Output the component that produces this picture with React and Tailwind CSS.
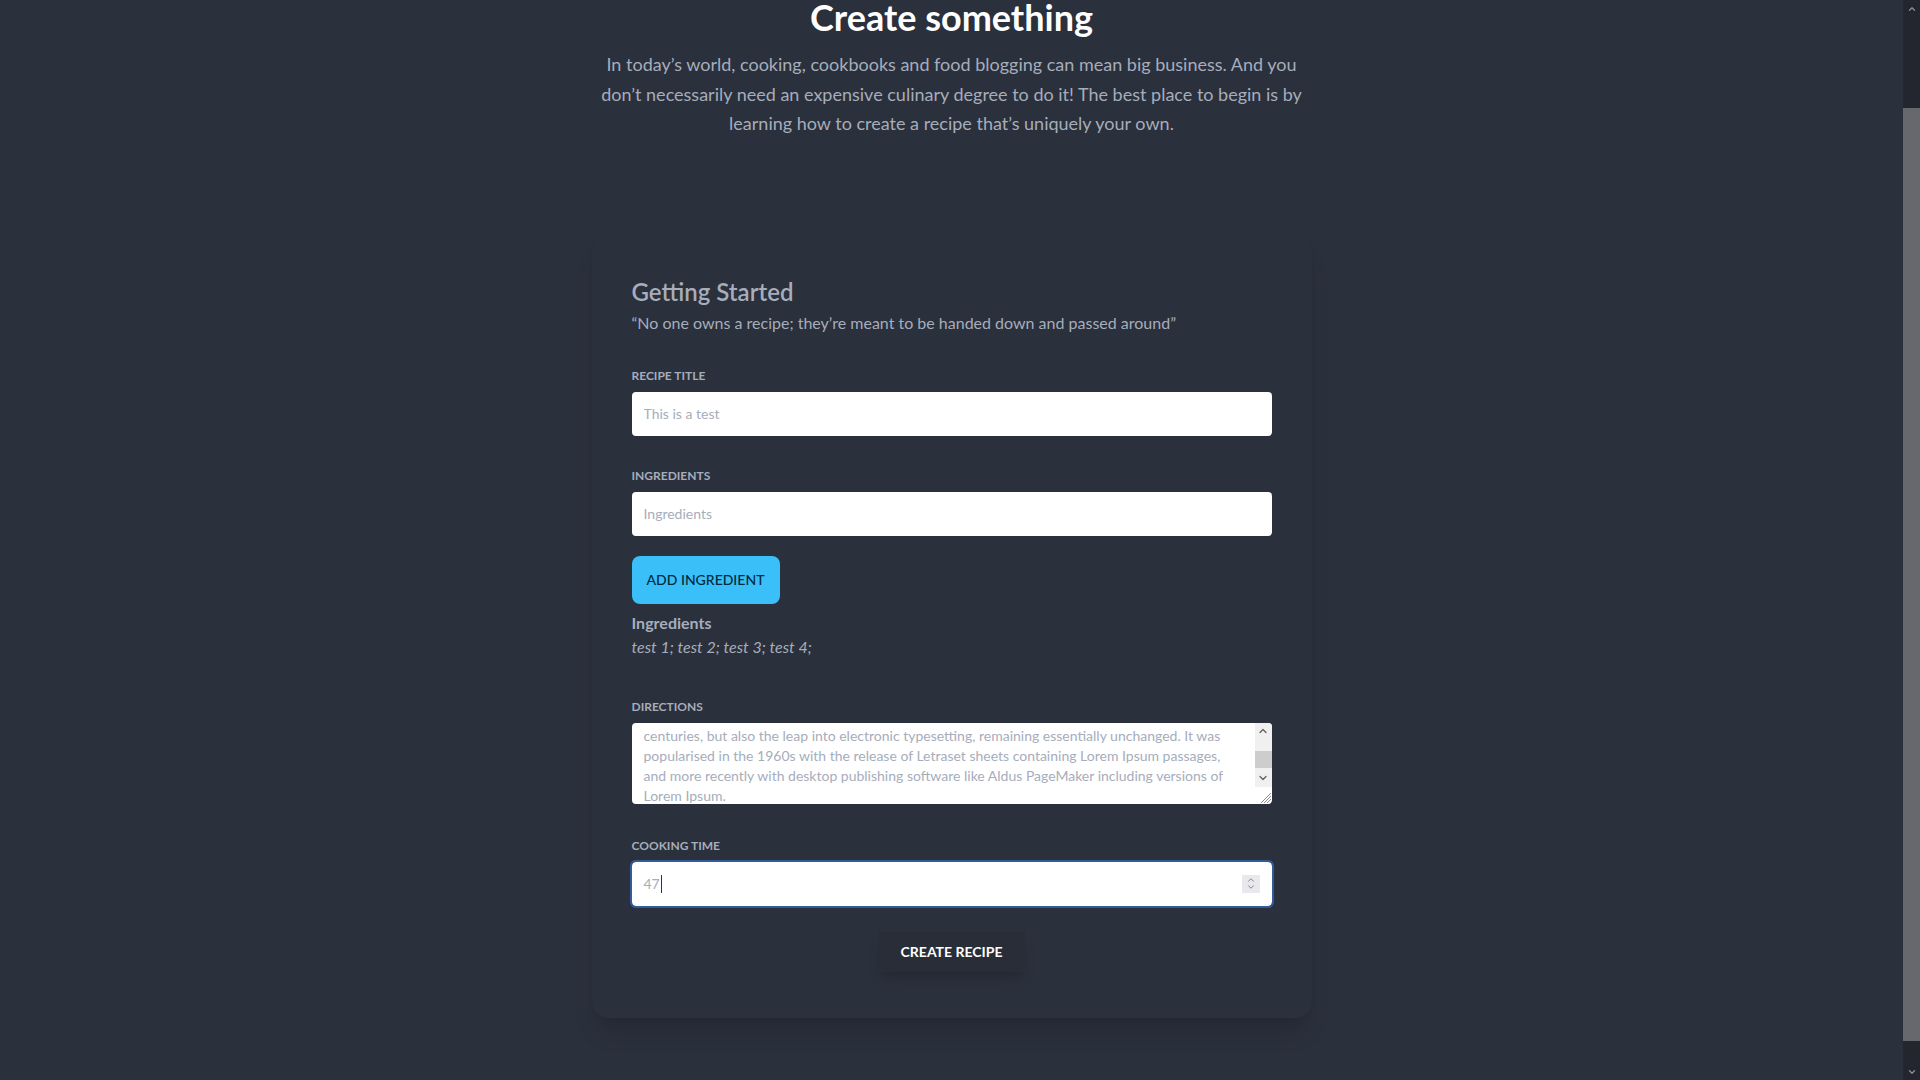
import { useEffect, useRef } from 'react';
import { ChevronUp, ChevronDown } from 'lucide-react';

const directions = [
  'Lorem Ipsum is simply dummy text of the printing and typesetting industry. Lorem Ipsum has',
  "been the industry's standard dummy text ever since the 1500s, when an unknown printer took a",
  'galley of type and scrambled it to make a type specimen book. It has survived not only five',
  'centuries, but also the leap into electronic typesetting, remaining essentially unchanged. It was',
  'popularised in the 1960s with the release of Letraset sheets containing Lorem Ipsum passages,',
  'and more recently with desktop publishing software like Aldus PageMaker including versions of',
  'Lorem Ipsum.',
].join('\n');

function FieldLabel({ children }) {
  return (
    <label className="block text-xs font-bold uppercase leading-4 text-[#a6adbb]">
      {children}
    </label>
  );
}

function DirectionsBox() {
  const ref = useRef(null);

  useEffect(() => {
    if (ref.current) ref.current.scrollTop = 65;
  }, []);

  return (
    <div className="mt-2 flex h-[81px] overflow-hidden rounded-[4px] bg-white">
      <textarea
        ref={ref}
        defaultValue={directions}
        spellCheck={false}
        className="min-w-0 flex-1 resize-none overflow-hidden whitespace-pre bg-transparent px-3 py-2 text-sm leading-5 text-[#a6adbb] outline-none"
      />
      <div className="flex w-[17px] flex-col">
        <div className="flex flex-1 flex-col bg-[#f0f0f0]">
          <div className="flex h-[17px] items-center justify-center">
            <ChevronUp size={12} strokeWidth={2.5} className="text-[#606060]" />
          </div>
          <div className="flex-1">
            <div className="mt-[11px] h-[17px] bg-[#cdcdcd]" />
          </div>
          <div className="flex h-[17px] items-center justify-center">
            <ChevronDown size={12} strokeWidth={2.5} className="text-[#606060]" />
          </div>
        </div>
        <div className="flex h-[17px] items-end justify-end">
          <svg width="14" height="14" viewBox="0 0 14 14" className="text-[#8a8a8a]">
            <path d="M13 3 L3 13 M13 6 L6 13 M13 9 L9 13" stroke="currentColor" strokeWidth="1" />
          </svg>
        </div>
      </div>
    </div>
  );
}

export default function App() {
  return (
    <div className="flex h-screen w-full overflow-hidden bg-[#2a303c] font-['Lato','Liberation_Sans',sans-serif]">
      <main className="flex min-w-0 flex-1 flex-col items-center">
        <div className="w-[720px] text-center">
          <h1 className="-mt-[3px] text-4xl font-bold leading-10 text-white">Create something</h1>
          <p className="mt-[13px] text-lg leading-[29.5px] text-[#a6adbb]">
            In today’s world, cooking, cookbooks and food blogging can mean big business. And you don’t necessarily
            need an expensive culinary degree to do it! The best place to begin is by learning how to create a recipe
            that’s uniquely your own.
          </p>
        </div>

        <section className="mt-[95px] w-[720px] rounded-2xl bg-[#2a303c] px-10 pb-[46px] pt-[42px] shadow-xl">
          <h2 className="text-2xl font-semibold leading-8 text-[#a6adbb]">Getting Started</h2>
          <p className="mt-[3px] text-base leading-6 text-[#a6adbb]">
            “No one owns a recipe; they’re meant to be handed down and passed around”
          </p>

          <div className="mt-[33px]">
            <FieldLabel>Recipe title</FieldLabel>
            <input
              type="text"
              placeholder="This is a test"
              className="mt-2 h-11 w-full rounded-[4px] bg-white px-3 text-sm text-[#a6adbb] outline-none placeholder:text-[#a6adbb]"
            />
          </div>

          <div className="mt-8">
            <FieldLabel>Ingredients</FieldLabel>
            <input
              type="text"
              placeholder="Ingredients"
              className="mt-2 h-11 w-full rounded-[4px] bg-white px-3 text-sm text-[#a6adbb] outline-none placeholder:text-[#a6adbb]"
            />
          </div>

          <button
            type="button"
            className="mt-5 h-12 w-[148px] rounded-lg bg-[#3abff8] text-sm font-medium uppercase text-[#002b3d]"
          >
            Add ingredient
          </button>

          <div className="mt-[7px]">
            <h3 className="text-base font-bold leading-6 text-[#a6adbb]">Ingredients</h3>
            <p className="text-base italic leading-6 text-[#a6adbb]">test 1; test 2; test 3; test 4;</p>
          </div>

          <div className="mt-10">
            <FieldLabel>Directions</FieldLabel>
            <DirectionsBox />
          </div>

          <div className="mt-[34px]">
            <FieldLabel>Cooking time</FieldLabel>
            <div className="mt-2 flex h-11 w-full items-center rounded-[4px] bg-white pl-3 pr-3 outline-2 outline-[#345a9a]">
              <div className="flex flex-1 items-center text-sm text-[#a6adbb]">
                47
                <span className="ml-px h-[18px] w-px bg-[#333]" />
              </div>
              <div className="flex h-[18px] w-[18px] flex-col items-center justify-center bg-[#e9e9ed] text-[#6f6f7a]">
                <ChevronUp size={10} strokeWidth={2} />
                <ChevronDown size={10} strokeWidth={2} className="-mt-[3px]" />
              </div>
            </div>
          </div>

          <div className="mt-[26px] flex justify-center">
            <button
              type="button"
              className="h-10 w-[146px] bg-[#282d38] text-sm font-bold uppercase text-white shadow-lg"
            >
              Create recipe
            </button>
          </div>
        </section>
      </main>

      <div className="flex h-screen w-[17px] flex-col bg-[#23262e]">
        <div className="flex h-[17px] items-center justify-center">
          <ChevronUp size={10} strokeWidth={3} className="text-[#8d8f96]" />
        </div>
        <div className="flex-1">
          <div className="mt-[91px] h-[933px] bg-[#67686d]" />
        </div>
        <div className="flex h-[17px] items-center justify-center">
          <ChevronDown size={10} strokeWidth={3} className="text-[#8d8f96]" />
        </div>
      </div>
    </div>
  );
}
